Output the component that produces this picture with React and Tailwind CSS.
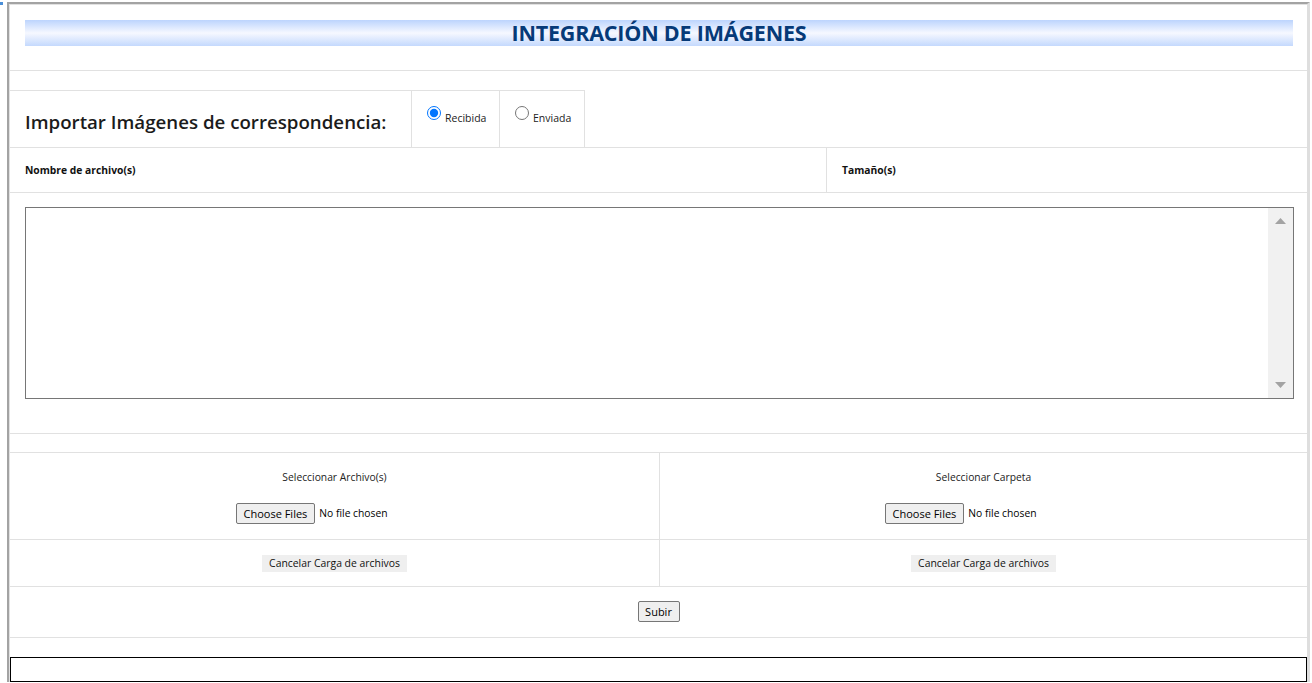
import React, { useState } from 'react';

const FakeFileInput = () => (
  <div className="w-[198px] flex items-center gap-[4px] text-left">
    <button type="button" className="h-[21px] px-[7px] border border-[#767676] rounded-[2px] bg-[#efefef] text-[11px] leading-none text-black">
      Choose Files
    </button>
    <span className="text-[10.3px] text-black whitespace-nowrap">No file chosen</span>
  </div>
);

const PlainButton = ({ children }) => (
  <button type="button" className="h-[17px] px-[7px] bg-[#efefef] text-[10.4px] leading-none text-[#111]">
    {children}
  </button>
);

export default function App() {
  const [tipo, setTipo] = useState('recibida');

  return (
    <div className="relative min-h-screen bg-white font-['Open_Sans',sans-serif] text-[#1a1a1a]">
      <span className="absolute top-0 left-0 w-[3px] h-[3px] bg-[#4a8fd8]" />
      <div className="ml-[7px] mt-[2px] w-[1303px] border-t-2 border-l-2 border-[#a3a3a3] border-r-[3px] border-r-[#dedede]">
        <div className="border-l border-t border-[#e1e1e1]">
          {/* titulo */}
          <div className="px-[15px] pt-[15px] pb-[24px] border-b border-[#e1e1e1]">
            <div className="h-[26px] w-[1268px] bg-[linear-gradient(to_bottom,#bcd4fd,#f6f8ff_50%,#c4d9fd)] flex items-center justify-center">
              <h1 className="text-[21.5px] font-bold leading-none text-[#063a78] tracking-[-0.2px]">INTEGRACIÓN DE IMÁGENES</h1>
            </div>
          </div>

          <div className="h-[19px]" />

          {/* tipo de correspondencia */}
          <div className="border-b border-[#e1e1e1]">
            <div className="flex w-fit border-t border-[#e1e1e1]">
              <div className="w-[402px] h-[56px] border-r border-[#e1e1e1] pl-[15px] pt-[18px]">
                <h2 className="text-[18.7px] font-semibold leading-[26px] text-[#1b1b1b]">Importar Imágenes de correspondencia:</h2>
              </div>
              <label className="w-[88px] h-[56px] border-r border-[#e1e1e1] pl-[15px] pt-[15px] flex items-start text-[10.5px] text-[#222]">
                <input
                  type="radio"
                  name="tipo"
                  checked={tipo === 'recibida'}
                  onChange={() => setTipo('recibida')}
                  className="m-0 mr-[4px] w-[14px] h-[14px]"
                />
                <span className="mt-[5px] leading-[15px]">Recibida</span>
              </label>
              <label className="w-[85px] h-[56px] border-r border-[#e1e1e1] pl-[15px] pt-[15px] flex items-start text-[10.5px] text-[#222]">
                <input
                  type="radio"
                  name="tipo"
                  checked={tipo === 'enviada'}
                  onChange={() => setTipo('enviada')}
                  className="m-0 mr-[4px] w-[14px] h-[14px]"
                />
                <span className="mt-[5px] leading-[15px]">Enviada</span>
              </label>
            </div>
          </div>

          {/* encabezados */}
          <div className="flex h-[45px] border-b border-[#e1e1e1] text-[10.3px] font-bold text-[#111]">
            <div className="w-[817px] border-r border-[#e1e1e1] pl-[15px] pt-[1px] flex items-center">Nombre de archivo(s)</div>
            <div className="flex-1 pl-[15px] pt-[1px] flex items-center">Tamaño(s)</div>
          </div>

          {/* lista */}
          <div className="pl-[15px] pt-[14px] pb-[34px] border-b border-[#e1e1e1]">
            <div className="w-[1269px] h-[192px] border border-[#767676] flex justify-end">
              <div className="w-[25px] h-full bg-[#f1f1f1] flex flex-col items-center justify-between py-[10px]">
                <svg width="11" height="6" viewBox="0 0 11 6"><path d="M5.5 0L11 6H0z" fill="#a3a3a3" /></svg>
                <svg width="11" height="6" viewBox="0 0 11 6"><path d="M0 0h11L5.5 6z" fill="#a3a3a3" /></svg>
              </div>
            </div>
          </div>

          <div className="h-[19px] border-b border-[#e1e1e1]" />

          {/* seleccion */}
          <div className="flex border-b border-[#e1e1e1] text-[10.3px] text-[#222]">
            <div className="w-[650px] border-r border-[#e1e1e1] flex flex-col items-center pt-[17px] pb-[15px]">
              <p className="leading-[15px]">Seleccionar Archivo(s)</p>
              <div className="mt-[18px]"><FakeFileInput /></div>
            </div>
            <div className="flex-1 flex flex-col items-center pt-[17px] pb-[15px]">
              <p className="leading-[15px]">Seleccionar Carpeta</p>
              <div className="mt-[18px]"><FakeFileInput /></div>
            </div>
          </div>

          <div className="flex h-[47px] border-b border-[#e1e1e1]">
            <div className="w-[650px] border-r border-[#e1e1e1] flex justify-center pt-[15px]">
              <PlainButton>Cancelar Carga de archivos</PlainButton>
            </div>
            <div className="flex-1 flex justify-center pt-[15px]">
              <PlainButton>Cancelar Carga de archivos</PlainButton>
            </div>
          </div>

          <div className="h-[51px] border-b border-[#e1e1e1] flex justify-center pt-[14px]">
            <button type="button" className="h-[21px] w-[42px] border border-[#767676] rounded-[2px] bg-[#efefef] text-[11px] leading-none text-black">
              Subir
            </button>
          </div>

          <div className="h-[19px]" />
          <div className="h-[25px] border border-black" />
        </div>
      </div>
    </div>
  );
}
